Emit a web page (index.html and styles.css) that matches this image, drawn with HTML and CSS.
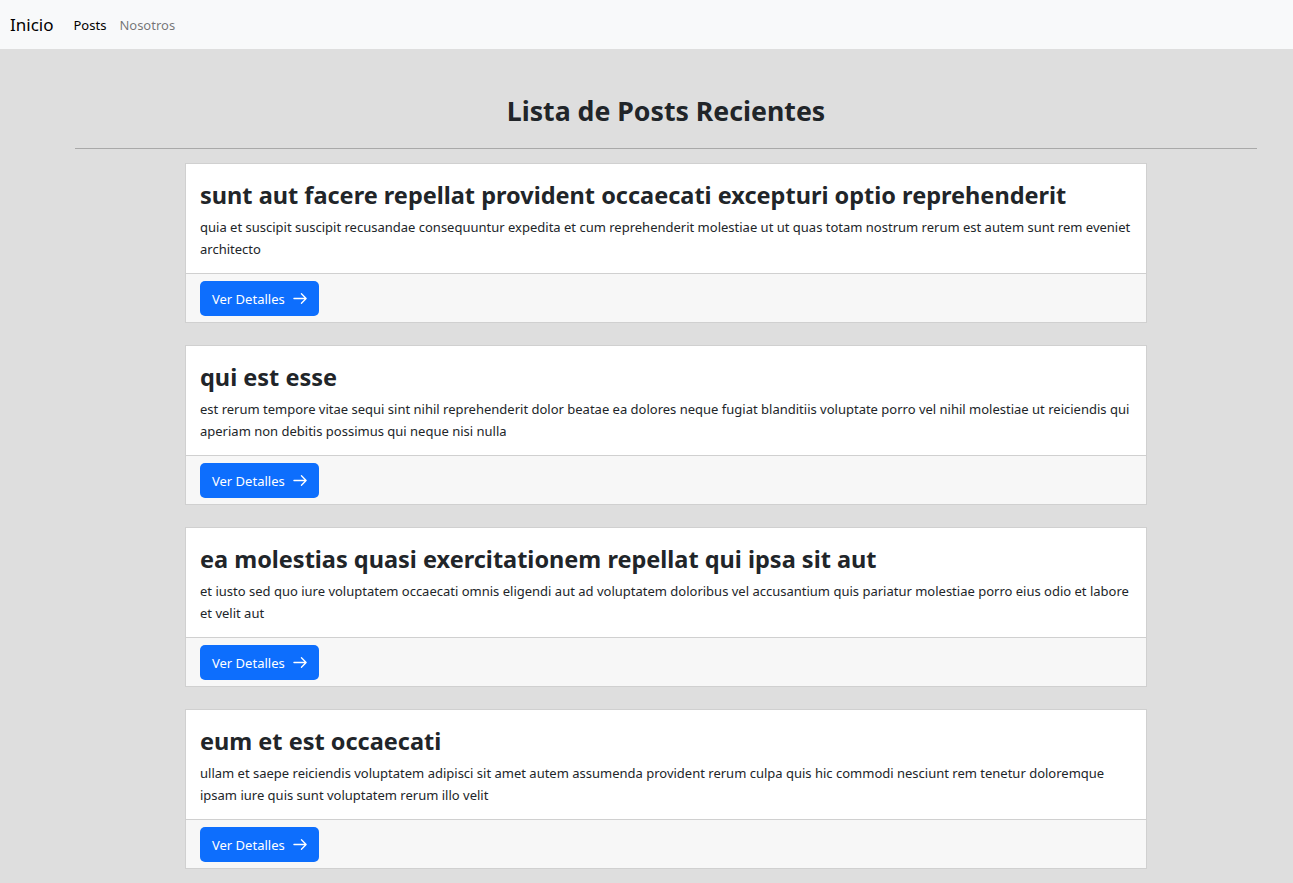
FILE: index.html
```html
<!DOCTYPE html>
<html lang="es">
<head>
<meta charset="utf-8">
<title>Posts</title>
<link rel="stylesheet" href="styles.css">
</head>
<body>
<nav class="navbar">
  <a class="brand" href="#">Inicio</a>
  <a class="nav-link active" href="#">Posts</a>
  <a class="nav-link" href="#">Nosotros</a>
</nav>
<main class="main">
  <h2 class="page-title">Lista de Posts Recientes</h2>
  <hr class="divider">
  <div class="list">
    <div class="card">
      <div class="card-body">
        <h3 class="card-title">sunt aut facere repellat provident occaecati excepturi optio reprehenderit</h3>
        <p class="card-text">quia et suscipit suscipit recusandae consequuntur expedita et cum reprehenderit molestiae ut ut quas totam nostrum rerum est autem sunt rem eveniet architecto</p>
      </div>
      <div class="card-footer"><a class="btn" href="#">Ver Detalles <svg class="arrow" viewBox="0 0 16 16" width="15" height="15"><path d="M1 8h13M9 3l5 5-5 5" fill="none" stroke="currentColor" stroke-width="1.4" stroke-linecap="round" stroke-linejoin="round"/></svg></a></div>
    </div>
    <div class="card">
      <div class="card-body">
        <h3 class="card-title">qui est esse</h3>
        <p class="card-text">est rerum tempore vitae sequi sint nihil reprehenderit dolor beatae ea dolores neque fugiat blanditiis voluptate porro vel nihil molestiae ut reiciendis qui aperiam non debitis possimus qui neque nisi nulla</p>
      </div>
      <div class="card-footer"><a class="btn" href="#">Ver Detalles <svg class="arrow" viewBox="0 0 16 16" width="15" height="15"><path d="M1 8h13M9 3l5 5-5 5" fill="none" stroke="currentColor" stroke-width="1.4" stroke-linecap="round" stroke-linejoin="round"/></svg></a></div>
    </div>
    <div class="card">
      <div class="card-body">
        <h3 class="card-title">ea molestias quasi exercitationem repellat qui ipsa sit aut</h3>
        <p class="card-text">et iusto sed quo iure voluptatem occaecati omnis eligendi aut ad voluptatem doloribus vel accusantium quis pariatur molestiae porro eius odio et labore et velit aut</p>
      </div>
      <div class="card-footer"><a class="btn" href="#">Ver Detalles <svg class="arrow" viewBox="0 0 16 16" width="15" height="15"><path d="M1 8h13M9 3l5 5-5 5" fill="none" stroke="currentColor" stroke-width="1.4" stroke-linecap="round" stroke-linejoin="round"/></svg></a></div>
    </div>
    <div class="card">
      <div class="card-body">
        <h3 class="card-title">eum et est occaecati</h3>
        <p class="card-text">ullam et saepe reiciendis voluptatem adipisci sit amet autem assumenda provident rerum culpa quis hic commodi nesciunt rem tenetur doloremque ipsam iure quis sunt voluptatem rerum illo velit</p>
      </div>
      <div class="card-footer"><a class="btn" href="#">Ver Detalles <svg class="arrow" viewBox="0 0 16 16" width="15" height="15"><path d="M1 8h13M9 3l5 5-5 5" fill="none" stroke="currentColor" stroke-width="1.4" stroke-linecap="round" stroke-linejoin="round"/></svg></a></div>
    </div>
  </div>
</main>
</body>
</html>
```
FILE: styles.css
```css
* { box-sizing: border-box; }
html, body { margin: 0; padding: 0; }
body {
  background: #dedede;
  font-family: "Noto Sans", "Open Sans", sans-serif;
  font-size: 13px;
  line-height: 22px;
  color: #212529;
}
.navbar {
  height: 49px;
  background: #f8f9fa;
  display: flex;
  align-items: center;
  padding: 0 10px;
}
.brand {
  font-size: 17px;
  color: #000;
  text-decoration: none;
  margin-right: 20px;
}
.nav-link {
  font-size: 13px;
  color: rgba(0,0,0,0.55);
  text-decoration: none;
  margin-right: 13px;
}
.nav-link.active { color: #000; }
.main {
  padding: 0 36px 0 75px;
}
.page-title {
  margin: 0;
  height: 99px;
  padding-top: 24px;
  display: flex;
  align-items: center;
  justify-content: center;
  font-size: 26.7px;
  line-height: 36px;
  font-weight: 700;
  color: #212529;
}
.divider {
  margin: 0;
  border: 0;
  border-top: 1px solid #a9a9a9;
}
.list {
  width: 962px;
  margin: 14px auto 0;
  display: flex;
  flex-direction: column;
  gap: 22px;
}
.card {
  background: #fff;
  border: 1px solid #d0d0d0;
  display: flex;
  flex-direction: column;
}
.card-body {
  padding: 14px 14px 12px;
  height: 109px;
}
.card-title {
  margin: 0 0 4px;
  font-size: 23.5px;
  line-height: 34px;
  font-weight: 700;
  color: #212529;
}
.card-text {
  margin: 0;
}
.card-footer {
  background: #f7f7f7;
  border-top: 1px solid #d0d0d0;
  padding: 7px 14px 6px;
  height: 49px;
}
.btn {
  display: inline-flex;
  align-items: center;
  gap: 8px;
  height: 35px;
  padding: 0 11px 0 12px;
  background: #0d6efd;
  color: #fff;
  text-decoration: none;
  border-radius: 5px;
  font-size: 13px;
}
.arrow { display: block; }
```
